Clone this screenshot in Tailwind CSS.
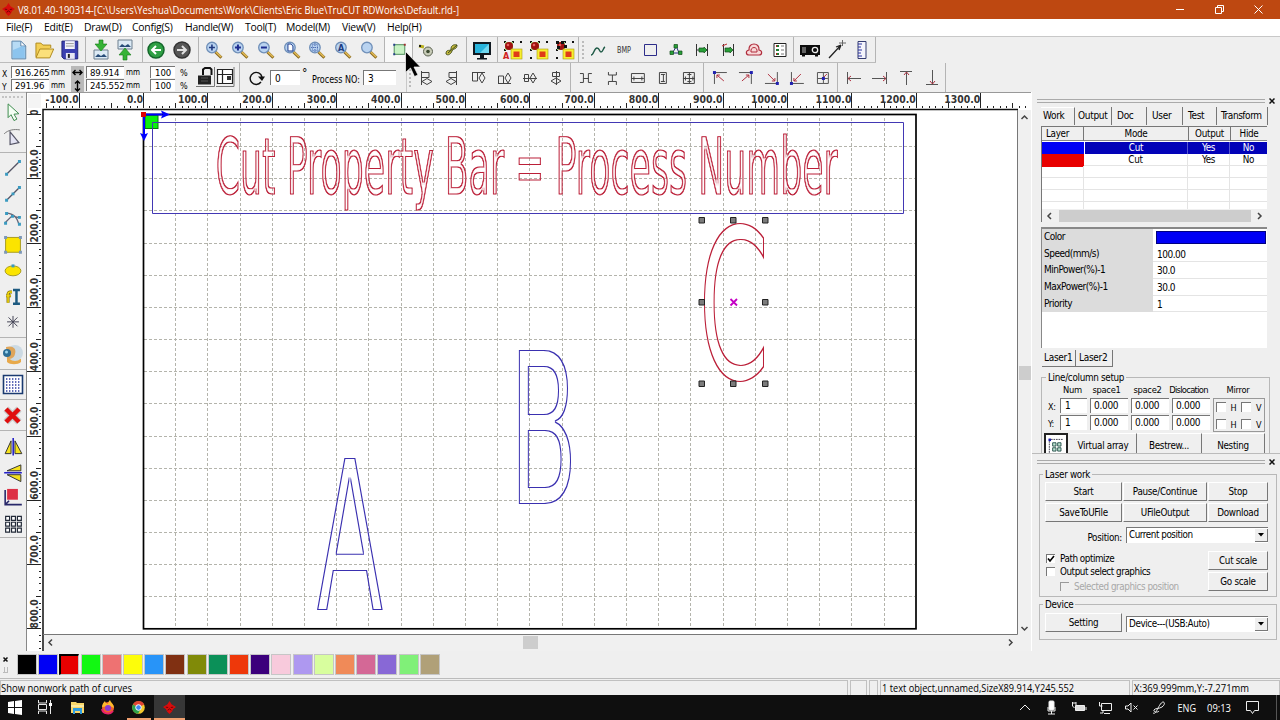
<!DOCTYPE html>
<html lang="en">
 <head>
  <meta charset="utf-8"/>
  <meta content="width=device-width, initial-scale=1.0" name="viewport"/>
  <title>
   RDWorks V8
  </title>
  <script src="https://cdn.jsdelivr.net/npm/@tailwindcss/browser@4"></script>
 </head>
 <body class="w-[1280px] h-[720px] overflow-hidden bg-[#efefef] flex flex-col text-black font-['DejaVu_Sans_Condensed','DejaVu_Sans',sans-serif] text-[10px] leading-none whitespace-nowrap">
  <!-- Shared symbols -->
  <svg class="hidden">
   <symbol id="lens" viewBox="0 0 18 18">
    <path d="M10.5 11l6 5.800" stroke="#8a6a20" stroke-width="3"/>
    <path d="M11 11l5.200 5" stroke="#e3bb55" stroke-width="1.600"/>
    <circle cx="7" cy="6.500" r="5.300" fill="#b9d3f0" stroke="#6f8fb8" stroke-width="1.300"/>
   </symbol>
   <symbol id="logo" viewBox="0 0 14 14">
    <path d="M7 0l2.200 3.600L14 6.400 11 8.600l-1.500 3L7 14l-2.500-2.400L3 8.600 0 6.400l4.800-2.800z" fill="#d80c0c"/>
    <path d="M3 6.600l2.600.4M11 6.600l-2.600.4M5 10l2-1.500 2 1.500" stroke="#6b0000" fill="none"/>
   </symbol>
   <symbol id="pick" viewBox="0 0 20 20">
    <g fill="#111"><path d="M1 1h2v2h-2zM9 1h2v2h-2zM17 1h2v2h-2zM1 9h2v2h-2zM17 9h2v2h-2zM1 17h2v2h-2zM9 17h2v2h-2z"/></g>
    <rect x="2" y="2" width="8" height="8" fill="#9bdc84"/>
    <circle cx="6" cy="6" r="4" fill="#a01010"/>
    <circle cx="5" cy="5" r="1.300" fill="#e86060"/>
    <rect x="8" y="9" width="11" height="10" fill="#f7ee30" stroke="#a89c10" stroke-width=".6"/>
    <rect x="10.500" y="11.500" width="6" height="5.500" fill="#e03a18"/>
   </symbol>
  </svg>
  <!-- Title bar -->
  <header class="h-[19px] shrink-0 bg-[#be4811] text-white flex items-center pl-[2px] font-['Open_Sans',sans-serif]">
   <svg class="w-[13px] h-[13px]"><use href="#logo"/></svg>
   <svg class="w-[460px] h-[19px] ml-[3px] overflow-visible"><text x="0" y="13.500" font-size="10.800" fill="#fff" textLength="441" lengthAdjust="spacingAndGlyphs">V8.01.40-190314-[C:\Users\Yeshua\Documents\Work\Clients\Eric Blue\TruCUT RDWorks\Default.rld-]</text></svg>
   <svg class="ml-auto mr-[20px] w-[90px] h-[19px] overflow-visible" fill="none" stroke="#fff">
    <path d="M6 9.500h8"/>
    <path d="M45.500 7.500h6v6h-6zM47.500 7v-1.500h6v6h-1.500"/>
    <path d="M84.500 5.500l8 8M92.500 5.500l-8 8"/>
   </svg>
  </header>
  <!-- Menu -->
  <nav class="h-[18px] shrink-0 bg-white flex items-center pl-[6px] font-['Open_Sans',sans-serif] text-[10.400px] tracking-[-0.250px] border-b border-[#c8c8c8]">
   <span class="w-[38px]">File(F)</span>
   <span class="w-[40px]">Edit(E)</span>
   <span class="w-[48px]">Draw(D)</span>
   <span class="w-[53px]">Config(S)</span>
   <span class="w-[60px]">Handle(W)</span>
   <span class="w-[41px]">Tool(T)</span>
   <span class="w-[56px]">Model(M)</span>
   <span class="w-[45px]">View(V)</span>
   <span>Help(H)</span>
  </nav>
  <!-- Main toolbar -->
  <div class="h-[26px] shrink-0 flex border-b border-[#bcbcbc] w-[876px]">
   <div class="w-[86px] pl-[6px] pr-[2px] border-r border-[#b4b4b4] flex items-center *:flex-1 *:h-[22px]">
    <svg viewBox="-13 -11 26 22"><path d="M-7-9h9l5 5V9H-7z" fill="#b7dbf5" stroke="#5f86aa"/><path d="M2-9v5h5z" fill="#fff" stroke="#5f86aa"/><path d="M-6 8L-6 0 4-4 6-3V8z" fill="#8cc4ee"/></svg>
    <svg viewBox="-13 -11 26 22"><path d="M-9 7V-7h5l2 2h8v3" fill="#f3cf55" stroke="#b08a20"/><path d="M-9 8l4-9H9L5 8z" fill="#fbe07a" stroke="#b08a20"/></svg>
    <svg viewBox="-13 -11 26 22"><path d="M-8-9H8V9H-6l-2-2z" fill="#3b3fb0" stroke="#24277a"/><path d="M-5-9H5v8H-5z" fill="#f2f2fa"/><path d="M-4-6.500h8M-4-4h8" stroke="#999"/><path d="M-4 3h9v6h-9z" fill="#e6e6f4"/><path d="M-2 4h2v4h-2z" fill="#222"/></svg>
   </div>
   <div class="w-[57px] pl-[3px] pr-[5px] border-r border-[#b4b4b4] flex items-center *:flex-1 *:h-[22px]">
    <svg viewBox="-12 -11 24 22"><path d="M-7 0H7V9H-7z" fill="#dceaf5" stroke="#6d7f8e"/><path d="M-6 7l3-3 3 2 3-2 3 3z" fill="#274c78"/><path d="M-2-10h4v4h4L0 1l-6-7h4z" fill="#36b336" stroke="#167a16" stroke-width=".6"/></svg>
    <svg viewBox="-12 -11 24 22"><path d="M-7-10H7V-1H-7z" fill="#dceaf5" stroke="#6d7f8e"/><path d="M-6-3l3-3 3 2 3-2 3 3z" fill="#274c78"/><path d="M-2 10h4V5h4L0-2l-6 7h4z" fill="#36b336" stroke="#167a16" stroke-width=".6"/></svg>
   </div>
   <div class="w-[56px] pr-[3px] border-r border-[#b4b4b4] flex items-center *:flex-1 *:h-[22px]">
    <svg viewBox="-13 -11 26 22"><circle r="8" fill="#2fa044" stroke="#13662a" stroke-width="1.500"/><path d="M5 0H-4M0-4l-4 4 4 4" stroke="#fff" stroke-width="2" fill="none"/></svg>
    <svg viewBox="-13 -11 26 22"><circle r="8" fill="#565656" stroke="#333" stroke-width="1.500"/><path d="M-5 0H4M0-4l4 4-4 4" stroke="#e0e0e0" stroke-width="2" fill="none"/></svg>
   </div>
   <div class="w-[186px] pl-[2px] pr-[2px] border-r border-[#b4b4b4] flex items-center *:flex-1 *:h-[22px]">
    <svg viewBox="-13 -11 26 22"><use href="#lens" x="-9" y="-9" width="18" height="18"/><path d="M-5-2.500h6M-2-5.500v6" stroke="#223a80" stroke-width="1.600"/></svg>
    <svg viewBox="-13 -11 26 22"><use href="#lens" x="-9" y="-9" width="18" height="18"/><path d="M-5-2.500h6M-2-5.500v6" stroke="#1d2c90" stroke-width="2"/></svg>
    <svg viewBox="-13 -11 26 22"><use href="#lens" x="-9" y="-9" width="18" height="18"/><path d="M-5-2.500h6" stroke="#1d2c90" stroke-width="2"/></svg>
    <svg viewBox="-13 -11 26 22"><use href="#lens" x="-9" y="-9" width="18" height="18"/><path d="M-4-6h3l2 2v5h-5z" fill="#fff" stroke="#1d3c90"/></svg>
    <svg viewBox="-13 -11 26 22"><use href="#lens" x="-9" y="-9" width="18" height="18"/><path d="M-4.500-5.500h5v6h-5zM-6-2.500h8M-2-7v9" fill="none" stroke="#4a6ab0" stroke-dasharray="1 1"/></svg>
    <svg viewBox="-13 -11 26 22"><use href="#lens" x="-9" y="-9" width="18" height="18"/><text x="-5" y="1" font-size="9" font-weight="bold" fill="#1d3c80">A</text></svg>
    <svg viewBox="-13 -11 26 22"><use href="#lens" x="-9" y="-9" width="18" height="18"/></svg>
   </div>
   <div class="w-[28px] pl-[2px] border-r border-[#b4b4b4] bg-[#f8f8f8] flex items-center *:flex-1 *:h-[22px]">
    <svg viewBox="-13 -11 26 22"><path d="M-5.500-5.500h11v10h-11z" fill="#c8f2c4" stroke="#4a8a58"/><path d="M-6.500-6.500h2v2h-2zM-6.500 3.500h2v2h-2z" fill="#28408a"/><path d="M4.500-6.500h2v2h-2z" fill="#a03030"/></svg>
   </div>
   <div class="w-[54px] pr-[1px] border-r border-[#b4b4b4] flex items-center *:flex-1 *:h-[22px]">
    <svg viewBox="-13 -11 26 22"><circle cx="2" cy="1.500" r="4.500" fill="#c8ccb8" stroke="#5a6050"/><circle cx="2" cy="1.500" r="1.800" fill="#3c4a30"/><path d="M-7-4l5 1" stroke="#b8b020" stroke-width="3"/><path d="M-7-4h2" stroke="#222" stroke-width="2"/></svg>
    <svg viewBox="-13 -11 26 22"><path d="M-6 4c0-6 5-2 5-5s2-5 6-4c0 5-4 3-5 6s-4 5-6 3z" fill="#c9bd3c" stroke="#4b5520"/><path d="M-4 3L5-5" stroke="#3d4a20"/></svg>
   </div>
   <div class="w-[31px] border-r border-[#b4b4b4] flex items-center *:flex-1 *:h-[22px]">
    <svg viewBox="-15 -11 30 22"><path d="M-9-8H9V5H-9z" fill="#101820"/><path d="M-7-6H7V3H-7z" fill="#28b4dc"/><path d="M7-6V3H-2z" fill="#6fd8f2"/><path d="M-2 5h4v3h3v1.500H-5V8h3z" fill="#101820"/></svg>
   </div>
   <div class="w-[81px] pl-[2px] border-r border-[#b4b4b4] flex items-center *:flex-1 *:h-[22px]">
    <svg viewBox="-13 -11 26 22"><use href="#pick" x="-10" y="-10" width="20" height="20"/><rect x="-10" y="1" width="6" height="9" fill="#efefef"/><text x="-10" y="9" font-size="9" font-weight="bold" fill="#d02020">A</text></svg>
    <svg viewBox="-13 -11 26 22"><use href="#pick" x="-10" y="-10" width="20" height="20"/></svg>
    <svg viewBox="-13 -11 26 22"><use href="#pick" x="-10" y="-10" width="20" height="20"/><path d="M-9-9h3v3h-3zM-4-9h3v3h-3zM-1-5h3v3h-3zM-8-4h3v3h-3z" fill="#111"/></svg>
   </div>
   <div class="w-[215px] pl-[2px] border-r border-[#b4b4b4] flex items-center">
    <i class="h-[18px] w-[5px] border-l-2 border-dotted border-[#bbb] ml-[1px] mr-[-1px]"></i>
    <div class="flex-1 flex *:flex-1 *:h-[22px]">
     <svg viewBox="-13 -11 26 22"><path d="M-7 5c3 0 3-7 6-7s2 4 4 4 2-4 4-5" fill="none" stroke="#1e5a46" stroke-width="1.400"/></svg>
     <svg viewBox="-13 -11 26 22"><text x="-7" y="3" font-size="8" textLength="14" lengthAdjust="spacingAndGlyphs" fill="#333">BMP</text></svg>
     <svg viewBox="-13 -11 26 22"><path d="M-5.500-5.500h12v11h-12z" fill="none" stroke="#2d2d8a"/></svg>
     <svg viewBox="-13 -11 26 22"><path d="M-3 2L0-3M3 3L1-2M-3 3h6" stroke="#223080"/><path d="M-2-5.500h3.500v3.500h-3.500zM-6 1h3.500v3.500h-3.500zM2.500 1h3.500v3.500H2.500z" fill="#28a038" stroke="#124a1a" stroke-width=".7"/></svg>
     <svg viewBox="-13 -11 26 22"><path d="M-5.500-6V6M5.500-6V6M-6 0h11" stroke="#333"/><path d="M-3-2h5v-1l3 3-3 3V2h-5z" fill="#28a038" stroke="#124a1a" stroke-width=".7"/></svg>
     <svg viewBox="-13 -11 26 22"><path d="M-4.500-6V6M5.500-6V6" stroke="#333"/><path d="M-6-4l5-2" stroke="#c03030"/><path d="M-3-2h5v-1l3 3-3 3V2h-5z" fill="#28a038" stroke="#124a1a" stroke-width=".7"/></svg>
     <svg viewBox="-13 -11 26 22"><path d="M-5 0c-1-8 11-8 10 0 4 1 3 5 0 5H-5c-3 0-4-4 0-5z" fill="#f8d8d8" stroke="#b02c3c" stroke-width="1.200"/><path d="M-3 2c-1-6 7-6 6 0z" fill="none" stroke="#b02c3c"/></svg>
     <svg viewBox="-13 -11 26 22"><path d="M-6-6.500H6v13H-6z" fill="#fff" stroke="#222"/><path d="M-4-4h3M-4 0h3M-4 4h3" stroke="#207a30" stroke-width="2"/><path d="M1-4h3M1 0h3M1 4h3" stroke="#777"/><path d="M-4-4h1M-4 4h1" stroke="#b02020" stroke-width="2"/></svg>
    </div>
   </div>
   <div class="w-[82px] pl-[3px] border-r border-[#b4b4b4] flex items-center *:flex-1 *:h-[22px]">
    <svg viewBox="-13 -11 26 22"><path d="M-10-5H10V5H8v1.500H5V5H-5v1.500h-3V5h-2z" fill="#0c0c0c"/><circle cx="5" r="2.700" fill="#0c0c0c" stroke="#eee" stroke-width="1.300"/><path d="M-7-3v6M-5-3v6" stroke="#bbb"/></svg>
    <svg viewBox="-13 -11 26 22"><path d="M-7 8L5-5M5-5l-5 2M5-5L3 0" stroke="#222" stroke-width="1.300"/><path d="M3-7h7M6.500-10v6" stroke="#666"/></svg>
    <svg viewBox="-13 -11 26 22"><path d="M-4-8.500h8v17h-8z" fill="#f4f4fb" stroke="#333b70"/><path d="M-4-6h4M-4-3h3M-4 0h4M-4 3h3M-4 6h4" stroke="#2a32a0"/></svg>
   </div>
  </div>
  <!-- Property bar and align bar -->
  <div class="h-[29px] shrink-0 flex">
   <div class="w-[240px] h-full flex pl-[2px] pt-[3px] border-r border-[#b4b4b4] text-[9.500px]">
    <div class="w-[9px] pt-[2px] leading-[13px] text-[8.500px]"><p>X</p><p>Y</p></div>
    <div class="w-[38px] flex flex-col gap-px tracking-[-0.100px]">
     <p class="h-[12px] bg-white border-t border-l border-[#777] pl-[3px] leading-[12px]">916.265</p>
     <p class="h-[12px] bg-white border-t border-l border-[#777] pl-[3px] leading-[12px]">291.96</p>
    </div>
    <div class="w-[22px] pl-[2px] leading-[13px] text-[8px]"><p>mm</p><p>mm</p></div>
    <svg class="w-[13px] h-[26px] bg-[#b9b9b9]" viewBox="0 0 13 26"><path d="M2 6.500h9M4.500 4L2 6.500 4.500 9M8.500 4L11 6.500 8.500 9M6.500 15v10M4 17.500L6.500 15 9 17.500M4 22.500L6.500 25 9 22.500" stroke="#000" stroke-width="1.400" fill="none"/></svg>
    <div class="w-[38px] ml-[2px] flex flex-col gap-px tracking-[-0.100px]">
     <p class="h-[12px] bg-white border-t border-l border-[#777] pl-[3px] leading-[12px]">89.914</p>
     <p class="h-[12px] bg-white border-t border-l border-[#777] pl-[3px] leading-[12px]">245.552</p>
    </div>
    <div class="w-[26px] pl-[2px] leading-[13px] text-[8px]"><p>mm</p><p>mm</p></div>
    <div class="w-[25px] flex flex-col gap-px">
     <p class="h-[12px] bg-white border-t border-l border-[#777] pl-[4px] leading-[12px]">100</p>
     <p class="h-[12px] bg-white border-t border-l border-[#777] pl-[4px] leading-[12px]">100</p>
    </div>
    <div class="w-[20px] pl-[5px] pt-px leading-[13px] text-[9px]"><p>%</p><p>%</p></div>
    <svg class="w-[40px] h-[22px]" viewBox="0 0 40 22"><path d="M1 20.500h18.500V1M21 20.500h18V1" stroke="#777" fill="none"/><path d="M8 9V3.500l2-1.500h5l1.500 1.500V9" stroke="#111" stroke-width="2" fill="none"/><path d="M3 9.500h13v9H3z" fill="#222"/><path d="M6 12h7M6 15h7" stroke="#555"/><path d="M22.500 3.500h15v14h-15zM22 8.500h16M27.500 3v15" fill="#fff" stroke="#222" stroke-width="1.200"/><path d="M32 10h4v4h-4z" fill="#333"/></svg>
   </div>
   <div class="w-[166px] h-full flex items-start pl-[8px] pt-[7px]">
    <svg class="w-[17px] h-[17px]" viewBox="0 0 17 17"><path d="M13 12A6 6 0 1 1 14 7" fill="none" stroke="#111" stroke-width="1.400"/><path d="M10 6.500h7L14 11z" fill="#111"/></svg>
    <p class="w-[30px] h-[15px] ml-[5px] bg-white border-t border-l border-[#777] pl-[4px] leading-[15px]">0</p>
    <span class="w-[11px] pl-[2px] -mt-[3px] text-[12px]">°</span>
    <svg class="w-[52px] h-[16px] overflow-visible"><text x="1" y="13" font-size="9.800" textLength="48" lengthAdjust="spacingAndGlyphs">Process NO:</text></svg>
    <p class="w-[33px] h-[15px] bg-white border-t border-l border-[#777] pl-[4px] leading-[15px]">3</p>
   </div>
   <div class="w-[165px] border-r border-l border-l-[#c8c8c8] border-[#b4b4b4] flex items-center pr-px">
    <i class="h-[18px] w-[5px] border-l-2 border-dotted border-[#bbb] ml-[2px] mr-0"></i>
    <div class="flex-1 flex *:flex-1 *:h-[22px]">
     <svg viewBox="-13 -11 26 22" fill="none" stroke="#444"><path d="M-4.500-7V7M-4-5.500h7v5h-7M-4 3.500l5-3 5 3-5 3z"/></svg>
     <svg viewBox="-13 -11 26 22" fill="none" stroke="#444"><path d="M4.500-7V7M4-5.500h-7v5h7M4 3.500l-5-3-5 3 5 3z"/></svg>
     <svg viewBox="-13 -11 26 22" fill="none" stroke="#444"><path d="M-6-5.500H7M-5.500-5v8h5v-8M4-5l3 5-3 5-3-5z"/></svg>
     <svg viewBox="-13 -11 26 22" fill="none" stroke="#444"><path d="M-6 5.500H7M-5.500 5v-7h5v7M4 5l3-5-3-5-3 5z"/></svg>
     <svg viewBox="-13 -11 26 22" fill="none" stroke="#444"><path d="M-7 .5H7M-5.500-3.500h4v7h-4zM3-5l3 5-3 5-3-5z"/></svg>
     <svg viewBox="-13 -11 26 22" fill="none" stroke="#444"><path d="M.5-7V7M-3.500-5.500h7v4h-7zM0 0l5 3-5 3-5-3z"/></svg>
    </div>
   </div>
   <div class="w-[133px] pl-[2px] pr-px border-r border-[#b4b4b4] flex items-center *:flex-1 *:h-[22px]">
    <svg viewBox="-13 -11 26 22" fill="none" stroke="#444"><path d="M-6-4.500h3.500v9H-6M6-4.500H2.500v9H6M-3 .5h6"/></svg>
    <svg viewBox="-13 -11 26 22" fill="none" stroke="#444"><path d="M-3.500-6v3h8v-3M-3.500 7V3.500h8V7M.5-3v6"/></svg>
    <svg viewBox="-13 -11 26 22" fill="none" stroke="#444"><path d="M-6.500-4.500h13v9h-13zM-6 .500H6M-4-1.500v4M4-1.500v4"/></svg>
    <svg viewBox="-13 -11 26 22" fill="none" stroke="#444"><path d="M-3.500-5.500h7v11h-7zM.5-4v8M-2-3.500H2M-2 3.500H2"/></svg>
    <svg viewBox="-13 -11 26 22" fill="none" stroke="#444"><path d="M-5.500-5.500h11v11h-11zM-6 .500H6M.5-6V6M-3.500-1.500v4M4-1.500v4M-1.500-3.500h4M-1.500 3.500h4"/></svg>
   </div>
   <div class="w-[134px] pl-[3px] pr-px border-r border-[#b4b4b4] flex items-center *:flex-1 *:h-[22px]">
    <svg viewBox="-13 -11 26 22" fill="none" stroke="#555"><path d="M-5.500 6V-5.500H7"/><path d="M4 3L-3-3M-3 0v-3H0" stroke="#b03040"/><path d="M-7-7h3v3h-3z" fill="#2020b0" stroke="none"/></svg>
    <svg viewBox="-13 -11 26 22" fill="none" stroke="#555"><path d="M5.500 6V-5.500H-7"/><path d="M-4 3L3-3M3 0v-3H0" stroke="#b03040"/><path d="M4-7h3v3H4z" fill="#2020b0" stroke="none"/></svg>
    <svg viewBox="-13 -11 26 22" fill="none" stroke="#555"><path d="M5.500-6V5.500H-7"/><path d="M-4-4L3 3M3 0v3H0" stroke="#b03040"/><path d="M4 4h3v3H4z" fill="#2020b0" stroke="none"/></svg>
    <svg viewBox="-13 -11 26 22" fill="none" stroke="#555"><path d="M-5.500-6V5.500H7"/><path d="M4-4L-3 3M-3 0v3H0" stroke="#b03040"/><path d="M-7 4h3v3h-3z" fill="#2020b0" stroke="none"/></svg>
    <svg viewBox="-13 -11 26 22" fill="none" stroke="#555"><path d="M-5.500-5.500h11v11h-11zM-5 .500H5M.5-5V5"/><path d="M4-4L0 0" stroke="#b03040"/><path d="M-1-1h3v3h-3z" fill="#2020b0" stroke="none"/></svg>
   </div>
   <div class="w-[108px] pl-[3px] border-r border-[#b4b4b4] flex items-center *:flex-1 *:h-[22px]">
    <svg viewBox="-13 -11 26 22" fill="none" stroke="#555"><path d="M-6.500-6V6M-6 .500H7"/><path d="M-3-2L-6 .500-3 3" stroke="#b03040"/></svg>
    <svg viewBox="-13 -11 26 22" fill="none" stroke="#555"><path d="M6.500-6V6M6 .500H-8"/><path d="M3-2L6 .500 3 3" stroke="#b03040"/></svg>
    <svg viewBox="-13 -11 26 22" fill="none" stroke="#555"><path d="M-6-6.500H6M.5-6V7"/><path d="M-2-3L.5-6 3-3" stroke="#b03040"/></svg>
    <svg viewBox="-13 -11 26 22" fill="none" stroke="#555"><path d="M-6 6.500H6M.5 6V-8"/><path d="M-2 3L.5 6 3 3" stroke="#b03040"/></svg>
   </div>
  </div>
  <!-- Work area -->
  <main class="h-[559px] shrink-0 flex">
   <!-- Drawing tools -->
   <aside class="w-[26px] shrink-0 flex flex-col pt-[3px] border-t border-[#bbb]">
    <i class="h-[2px] w-[21px] mx-[2px] border-t-2 border-dotted border-[#c4c4c4]"></i>
    <div class="h-[55px] pt-px pb-[2px] border-b border-[#b4b4b4] flex flex-col *:flex-1 *:w-[26px]">
     <svg viewBox="-13 -13 26 26"><path d="M-5-8L6 2l-5 .5L4 7.500 1 9l-3-6-3 3z" fill="#f4fff4" stroke="#3c8a4c"/></svg>
     <svg viewBox="-13 -13 26 26"><path d="M-9-4c4-4 10-5 16-4" fill="none" stroke="#777"/><path d="M-3-6L6 5l-9 2z" fill="#e4e4f4" stroke="#556" stroke-width="1.200"/></svg>
    </div>
    <div class="h-[185px] pt-[2px] pb-[2px] border-b border-[#b4b4b4] flex flex-col *:flex-1 *:w-[26px] *:min-h-0">
     <svg viewBox="-13 -13 26 26"><path d="M-6 6L6-6" stroke="#556" stroke-width="1.300"/><path d="M-8 5h3v3h-3zM5-8h3v3H5z" fill="#3a9ac0"/></svg>
     <svg viewBox="-13 -13 26 26"><path d="M-6 6L6-6" stroke="#556" stroke-width="1.300"/><path d="M-8 5h3v3h-3zM5-8h3v3H5zM-1.500-1.500h3v3h-3z" fill="#3a9ac0"/></svg>
     <svg viewBox="-13 -13 26 26"><path d="M-8 4L-1-3 7-1M-7-6C1-5 4-2 6 6" fill="none" stroke="#667" stroke-width="1.300"/><path d="M-9 3h3v3h-3zM-8-7h3v3h-3zM5 4h3v3H5zM5-3h3v3H5zM-2-4h3v3h-3z" fill="#3a9ac0"/></svg>
     <svg viewBox="-13 -13 26 26"><path d="M-7.500-7.500h15v15h-15z" fill="#fbe400" stroke="#a89c20"/><path d="M-9-9h3v3h-3zM6-9h3v3H6zM-9 6h3v3h-3zM6 6h3v3H6z" fill="#7d98b8"/></svg>
     <svg viewBox="-13 -13 26 26"><ellipse rx="8" ry="5" fill="#fbe400" stroke="#a89c20"/><path d="M-1.500-6.500h3v3h-3z" fill="#3a9ac0"/></svg>
     <svg viewBox="-13 -13 26 26"><path d="M0-7h7M3.500-7V7M0 7h7" stroke="#1d5a80" stroke-width="2.500"/><path d="M-1-5h-2c-1 0-2 1-2 2V6M-7-1h5" fill="none" stroke="#7a6a00" stroke-width="3"/><path d="M-1-5h-2c-1 0-2 1-2 2V6M-7-1h5" fill="none" stroke="#f7dc10" stroke-width="1.500"/></svg>
     <svg viewBox="-13 -13 26 26"><path d="M0-6V6M-6 0H6M-4.500-4.500l9 9M4.500-4.500l-9 9" stroke="#445"/></svg>
    </div>
    <div class="h-[32px] border-b border-[#b4b4b4]">
     <svg class="w-[26px] h-[32px]" viewBox="-13 -16 26 32"><path d="M-6 5H8v3c-3 3-11 3-14 0z" fill="#e8a94a"/><circle cx="2" cy="-1" r="8" fill="#ccdae4"/><path d="M-7-7c6-2 11 1 9 7-1 5-6 5-8 5z" fill="#dea55a"/><circle cx="-6" cy="-1" r="4" fill="#2d6e96"/><circle cx="-6.500" cy="-2" r="1.500" fill="#9cd4ee"/></svg>
    </div>
    <div class="h-[30px] border-b border-[#b4b4b4]">
     <svg class="w-[26px] h-[30px]" viewBox="-13 -15 26 30"><path d="M-9.500-9.500h19v18h-19z" fill="#fff" stroke="#1a3a70" stroke-width="1.600"/><path d="M-7-6H8M-7-3H8M-7 0H8M-7 3H8M-7 6H8" stroke="#2c3ca0" stroke-width="1.400" stroke-dasharray="1.400 1.600"/></svg>
    </div>
    <div class="h-[31px] border-b border-[#b4b4b4]">
     <svg class="w-[26px] h-[31px]" viewBox="-13 -15 26 31"><path d="M-7-6L6 7M6-6L-7 7" stroke="#c9c9c9" stroke-width="7"/><path d="M-7-6L6 7M6-6L-7 7" stroke="#e00d0d" stroke-width="4.500"/></svg>
    </div>
    <div class="h-[107px] pt-[3px] pb-px border-b border-[#b4b4b4] flex flex-col *:flex-1 *:w-[26px] *:min-h-0">
     <svg viewBox="-13 -13 26 26"><path d="M-2-6V7h-6zM2-6V7h7z" fill="#f5e11c" stroke="#333"/><path d="M.2-9V9" stroke="#2420c8" stroke-width="1.600"/></svg>
     <svg viewBox="-13 -13 26 26"><path d="M8-8v6H-6zM8 2v7L-6 2z" fill="#f5e11c" stroke="#333"/><path d="M-9 0H9" stroke="#2420c8" stroke-width="1.600"/></svg>
     <svg viewBox="-13 -13 26 26"><path d="M-6-9H5V2H-6z" fill="#dd3045"/><path d="M-8-8V7H9M-8 7l4-4" stroke="#28286a" stroke-width="1.600" fill="none"/></svg>
     <svg viewBox="-13 -13 26 26"><path d="M-7.500-7.500h4v4h-4zM-1.500-7.500h4v4h-4zM4.500-7.500h4v4h-4zM-7.500-1.500h4v4h-4zM-1.500-1.500h4v4h-4zM4.500-1.500h4v4h-4zM-7.500 4.500h4v4h-4zM-1.500 4.500h4v4h-4zM4.500 4.500h4v4h-4z" fill="#fff" stroke="#222a38" stroke-width="1.200"/></svg>
    </div>
   </aside>
   <!-- Rulers and bed, drawn in screen units -->
   <svg class="w-[1005px] h-[559px] shrink-0" viewBox="26 92 1005 559" font-family="DejaVu Sans Condensed, DejaVu Sans, sans-serif">
    <!-- Keeps only a one pixel rim of the filled letters -->
    <filter id="outline" filterUnits="userSpaceOnUse" x="143" y="114" width="773" height="515" color-interpolation-filters="sRGB">
     <feMorphology in="SourceGraphic" operator="erode" radius="1" result="inner"/>
     <feComposite in="SourceGraphic" in2="inner" operator="out"/>
    </filter>
    <rect x="27" y="93" width="1004" height="558" fill="#fff"/>
    <path d="M26 92.500h1005" stroke="#999"/>
    <path d="M26.500 92v559" stroke="#888"/>
    <rect x="28" y="94" width="13" height="14" fill="#f4f4f4"/>
    <g id="rulers" stroke="#222"></g>
    <g id="labels" fill="#333" font-size="10.800" font-weight="bold"></g>
    <path d="M43 651V109.500H1018" fill="none" stroke="#111" stroke-width="1.500"/>
    <rect x="1018" y="110" width="13" height="541" fill="#f0f0f0"/>
    <rect x="44" y="635" width="987" height="16" fill="#f0f0f0"/>
    <path d="M1017.500 110v524.500H43" fill="none" stroke="#777"/>
    <rect x="1019" y="366" width="12" height="14" fill="#cdcdcd"/>
    <rect x="523" y="636" width="15" height="13" fill="#cdcdcd"/>
    <path d="M1021.500 119l3-3 3 3M1021.500 627l3 3 3-3M52 639.500l-3 3 3 3M1009 639.500l3 3-3 3" fill="none" stroke="#444" stroke-width="1.500"/>
    <g id="grid" stroke="#b4b4ac" stroke-dasharray="3 2"></g>
    <rect x="143.500" y="114.500" width="772.500" height="514.300" fill="none" stroke="#000" stroke-width="1.700"/>
    <rect x="145" y="115.500" width="13" height="13" fill="#0cf00c" stroke="#087a08"/>
    <path d="M152.500 213.500V122.500H903.500V213.500z" fill="none" stroke="#4238b4"/>
    <path d="M143.800 114.500H162M144 115v20" stroke="#00f" stroke-width="2"/>
    <path d="M161 110.500l9 4-9 4 1.500-4zM140 133l4 8 4-8-4 1.500z" fill="#00f"/>
    <rect x="141" y="112" width="5" height="5" fill="#e00000"/>
    <!-- Engraved text -->
    <g filter="url(#outline)" font-family="DejaVu Sans">
     <text transform="translate(215.700 194) scale(.4485 1)" font-size="77.500" fill="#bb1f38" stroke="#bb1f38" stroke-width="1">Cut Property Bar = Process Number</text>
     <text transform="translate(316.200 610) scale(.469 1)" font-size="209.500" fill="#3a30b0">A</text>
     <text transform="translate(509 504.200) scale(.48 1)" font-size="210" fill="#3a30b0">B</text>
     <text transform="translate(698.300 379) scale(.486 1)" font-size="210" fill="#bb1f38">C</text>
    </g>
    <path d="M699 217.500h5.500v5.500h-5.500zM730.500 217.500h5.500v5.500h-5.500zM762.500 217.500h5.500v5.500h-5.500zM699 299.500h5.500v5.500h-5.500zM762.500 299.500h5.500v5.500h-5.500zM699 381h5.500v5.500h-5.500zM730.500 381h5.500v5.500h-5.500zM762.500 381h5.500v5.500h-5.500z" fill="#7c7c7c" stroke="#222"/>
    <path d="M730.500 299l6.500 6.500M737 299l-6.500 6.500" stroke="#c400c4" stroke-width="1.800"/>
   </svg>
   <!-- Right panels -->
   <aside class="w-[249px] shrink-0 flex flex-col border-l border-white pl-[5px] tracking-[-0.300px]">
    <div class="h-[15px] flex items-center pt-[2px]">
     <i class="w-[228px] h-[4px] border-t border-b border-[#aaa]"></i>
     <svg class="w-[6px] h-[6px] ml-[4px]"><path d="M.5.500l5 5M5.500.500l-5 5" stroke="#111" stroke-width="1.500"/></svg>
    </div>
    <div class="flex h-[18px] pl-[4px] leading-[18px]">
     <span class="w-[34px] pl-[2px] border-r border-[#777] border-t border-t-white leading-[15px]">Work</span>
     <span class="w-[37px] pl-[3px] border-r border-[#777]">Output</span>
     <span class="w-[35px] pl-[5px] border-r border-[#777]">Doc</span>
     <span class="w-[36px] pl-[5px] border-r border-[#777]">User</span>
     <span class="w-[34px] pl-[5px] border-r border-[#777]">Test</span>
     <span class="w-[51px] pl-[4px] border-r border-[#777] tracking-[-0.450px]">Transform</span>
    </div>
    <div class="ml-[4px] w-[226px] h-[96px] mt-px bg-white border-t border-l border-[#777] flex flex-col text-center text-[9.800px]">
     <div class="h-[14px] bg-[#efefef] grid grid-cols-[42px_105px_42px_36px] leading-[14px] border-b border-[#888]">
      <span class="border-r border-[#777] pr-[10px]">Layer</span>
      <span class="border-r border-[#777]">Mode</span>
      <span class="border-r border-[#777]">Output</span>
      <span>Hide</span>
     </div>
     <div class="h-[12px] mt-px grid grid-cols-[42px_104px_42px_37px] leading-[12px]">
      <span class="bg-[#0000f5]"></span>
      <span class="bg-[#0202b8] text-white ml-px border-r border-[#5555d0]">Cut</span>
      <span class="bg-[#0202b8] text-white border-r border-[#5555d0]">Yes</span>
      <span class="bg-[#0202b8] text-white">No</span>
     </div>
     <div class="h-[12px] grid grid-cols-[42px_104px_42px_37px] leading-[12px] border-b border-[#e4e4e4]">
      <span class="bg-[#e80000] -mb-px"></span>
      <span class="border-r border-[#e4e4e4]">Cut</span>
      <span class="border-r border-[#e4e4e4]">Yes</span>
      <span>No</span>
     </div>
     <div class="h-[12px] grid grid-cols-[42px_104px_42px_37px] border-b border-[#e4e4e4] *:border-r *:border-[#e4e4e4]"><i></i><i></i><i></i></div>
     <div class="h-[12px] grid grid-cols-[42px_104px_42px_37px] border-b border-[#e4e4e4] *:border-r *:border-[#e4e4e4]"><i></i><i></i><i></i></div>
     <div class="h-[12px] grid grid-cols-[42px_104px_42px_37px] border-b border-[#e4e4e4] *:border-r *:border-[#e4e4e4]"><i></i><i></i><i></i></div>
     <div class="flex-1 grid grid-cols-[42px_104px_42px_37px] *:border-r *:border-[#e4e4e4]"><i></i><i></i><i></i></div>
     <div class="h-[13px] bg-[#f0f0f0] flex items-center justify-between px-[4px]">
      <svg class="w-[6px] h-[8px]"><path d="M5 1L2 4l3 3" fill="none" stroke="#444" stroke-width="1.500"/></svg>
      <i class="h-[12px] w-[192px] bg-[#cdcdcd]"></i>
      <svg class="w-[6px] h-[8px]"><path d="M1 1l3 3-3 3" fill="none" stroke="#444" stroke-width="1.500"/></svg>
     </div>
    </div>
    <div class="ml-[4px] mt-[5px] w-[226px] h-[121px] bg-white border-t-2 border-l border-[#888] grid grid-cols-[111px_114px] auto-rows-[16.700px] leading-[15px] content-start tracking-[-0.500px]">
     <span class="bg-[#dcdcdc] pl-[2px]">Color</span>
     <span class="m-[2px_1px_2px_3px] bg-[#0000f5] border border-[#000080]"></span>
     <span class="bg-[#dcdcdc] pl-[2px]">Speed(mm/s)</span>
     <span class="pl-[4px] border-b border-[#e4e4e4] pt-px">100.00</span>
     <span class="bg-[#dcdcdc] pl-[2px]">MinPower(%)-1</span>
     <span class="pl-[4px] border-b border-[#e4e4e4] pt-px">30.0</span>
     <span class="bg-[#dcdcdc] pl-[2px]">MaxPower(%)-1</span>
     <span class="pl-[4px] border-b border-[#e4e4e4] pt-px">30.0</span>
     <span class="bg-[#dcdcdc] pl-[2px]">Priority</span>
     <span class="pl-[4px] border-b border-[#e4e4e4] pt-px">1</span>
    </div>
    <div class="flex ml-[5px] h-[17px] mt-[2px] leading-[16px]">
     <span class="w-[34px] pl-[2px] border-r border-b border-[#777]">Laser1</span>
     <span class="w-[37px] pl-[3px] border-r border-b border-[#777]">Laser2</span>
    </div>
    <div class="h-[87px] overflow-hidden">
     <fieldset class="ml-[4px] mt-[6px] w-[229px] h-[100px] border border-[#b8b8b8] pl-[2px]">
      <legend class="ml-[2px] px-[2px] text-[9.800px]">Line/column setup</legend>
      <div class="grid grid-cols-[42px_41px_41px_41px_58px] text-[9.300px] h-[13px] items-center text-center">
       <span class="pl-[15px]">Num</span>
       <span>space1</span>
       <span>space2</span>
       <span class="tracking-[-0.700px]">Dislocation</span>
       <span>Mirror</span>
      </div>
      <div class="flex h-[37px] pt-[2px]">
       <div class="grid grid-cols-[13px_27px_38px_38px_38px] auto-rows-[15px] gap-y-[2px] gap-x-[3px] leading-[14px] *:border-[#777]">
        <span class="pl-[4px] pt-[2px] text-[9px]">X:</span>
        <span class="bg-white border-t border-l pl-[4px]">1</span>
        <span class="bg-white border-t border-l pl-[3px]">0.000</span>
        <span class="bg-white border-t border-l pl-[3px]">0.000</span>
        <span class="bg-white border-t border-l pl-[3px]">0.000</span>
        <span class="pl-[4px] pt-[2px] text-[9px]">Y:</span>
        <span class="bg-white border-t border-l pl-[4px]">1</span>
        <span class="bg-white border-t border-l pl-[3px]">0.000</span>
        <span class="bg-white border-t border-l pl-[3px]">0.000</span>
        <span class="bg-white border-t border-l pl-[3px]">0.000</span>
       </div>
       <div class="ml-[3px] w-[52px] h-[34px] border border-[#999] grid grid-cols-[10px_15px_10px_15px] gap-y-[2px] pl-[2px] pt-[2px] content-start text-[9px] leading-[14px]">
        <i class="w-[10px] h-[10px] mt-px bg-white border-t border-l border-[#777]"></i><span class="text-center">H</span>
        <i class="w-[10px] h-[10px] mt-px bg-white border-t border-l border-[#777]"></i><span class="text-center">V</span>
        <i class="w-[10px] h-[10px] mt-[2px] bg-white border-t border-l border-[#777]"></i><span class="text-center pt-px">H</span>
        <i class="w-[10px] h-[10px] mt-[2px] bg-white border-t border-l border-[#777]"></i><span class="text-center pt-px">V</span>
       </div>
      </div>
      <div class="flex h-[27px] leading-[23px] text-center text-[9.800px]">
       <svg class="w-[24px] h-[27px] bg-white border-2 border-[#222] mr-[2px]" viewBox="0 0 24 27"><path d="M4 24V5h16" fill="none" stroke="#223" stroke-dasharray="2 1"/><path d="M8 9h4v4H8zM14 9h4v4h-4zM8 15h4v4H8zM14 15h4v4h-4z" fill="#bfe4d4" stroke="#12403a"/><path d="M3 4h3v3H3z" fill="#1818b0"/></svg>
       <span class="w-[67px] border-t border-t-white border-r border-r-[#777]">Virtual array</span>
       <span class="w-[65px] border-t border-t-white border-r border-r-[#777]">Bestrew...</span>
       <span class="w-[63px] border-t border-t-white border-r border-r-[#777]">Nesting</span>
      </div>
     </fieldset>
    </div>
    <div class="h-[15px] border-t border-[#bbb] mt-[-1px] -ml-[5px] pl-[5px] flex items-center pt-[2px]">
     <i class="w-[228px] h-[4px] border-t border-b border-[#aaa]"></i>
     <svg class="w-[6px] h-[6px] ml-[4px]"><path d="M.5.500l5 5M5.500.500l-5 5" stroke="#111" stroke-width="1.500"/></svg>
    </div>
    <fieldset class="ml-[2px] mt-[2px] w-[238px] h-[127px] border border-[#b8b8b8] pl-[5px] flex flex-col text-[9.800px]">
     <legend class="ml-[-2px] px-[2px]">Laser work</legend>
     <div class="grid grid-cols-[77px_84px_60px] auto-rows-[19px] gap-x-px gap-y-[2px] mt-[2px] leading-[18px] text-center *:border *:border-white *:border-r-[#777] *:border-b-[#777]">
      <span>Start</span><span>Pause/Continue</span><span>Stop</span>
      <span>SaveToUFile</span><span>UFileOutput</span><span>Download</span>
     </div>
     <div class="flex mt-[5px] h-[16px]">
      <span class="w-[81px] text-right pr-[4px] pt-[6px] tracking-[-0.300px]">Position:</span>
      <span class="w-[142px] bg-white border-t border-l border-[#777] pl-[2px] flex items-center justify-between tracking-[-0.450px]">Current position <i class="w-[13px] h-[13px] bg-[#efefef] border-r border-b border-[#777] flex items-center justify-center"><svg class="w-[6px] h-[4px]"><path d="M0 0h6L3 3.500z"/></svg></i></span>
     </div>
     <div class="flex mt-[7px]">
      <div class="w-[163px] pl-px pt-[4px] flex flex-col gap-[3px] tracking-[-0.450px]">
       <p class="flex items-center h-[10px]"><i class="w-[9px] h-[9px] bg-white border-t border-l border-[#777] mr-[5px]"><svg class="w-[8px] h-[8px]"><path d="M1 3.500l2 2.500 4-5" fill="none" stroke="#000" stroke-width="1.600"/></svg></i>Path optimize</p>
       <p class="flex items-center h-[10px]"><i class="w-[9px] h-[9px] bg-white border-t border-l border-[#777] mr-[5px]"></i>Output select graphics</p>
       <p class="flex items-center h-[14px] pl-[14px] text-[#a8a8a8]"><i class="w-[9px] h-[9px] border-t border-l border-[#999] mr-[5px]"></i>Selected graphics position</p>
      </div>
      <div class="flex flex-col gap-[2px] pt-px leading-[18px] text-center *:w-[60px] *:h-[19px] *:border *:border-white *:border-r-[#777] *:border-b-[#777]">
       <span>Cut scale</span><span>Go scale</span>
      </div>
     </div>
    </fieldset>
    <fieldset class="ml-[2px] mt-[3px] w-[238px] h-[40px] border border-[#b8b8b8] pl-[5px] text-[9.800px]">
     <legend class="ml-[-2px] px-[2px]">Device</legend>
     <div class="flex gap-[4px] mt-[3px]">
      <span class="w-[77px] h-[19px] leading-[18px] text-center border border-white border-r-[#777] border-b-[#777]">Setting</span>
      <span class="w-[142px] h-[16px] mt-[3px] bg-white border-t border-l border-[#777] pl-[2px] flex items-center justify-between tracking-[-0.400px]">Device---(USB:Auto) <i class="w-[13px] h-[13px] bg-[#efefef] border-r border-b border-[#777] flex items-center justify-center"><svg class="w-[6px] h-[4px]"><path d="M0 0h6L3 3.500z"/></svg></i></span>
     </div>
    </fieldset>
   </aside>
  </main>
  <!-- Colour palette -->
  <div class="h-[28px] shrink-0 flex items-center border-b border-[#bbb]">
   <svg class="w-[17px] h-[22px]" viewBox="0 0 17 22"><path d="M3.500 3.500l4 4M7.500 3.500l-4 4" stroke="#111" stroke-width="1.500"/><path d="M4.500 13v5.500M7.500 13v5.500M3 18.500h5" stroke="#bbb"/></svg>
   <div class="grid grid-cols-20 w-[424px] *:h-[21px] *:w-[20px] *:border *:border-[#c6c6c6]">
    <i class="bg-black"></i>
    <i class="bg-[#0000f5]"></i>
    <i class="bg-[#e80000] border-t-2! border-l-2! border-t-black! border-l-black!"></i>
    <i class="bg-[#12f812]"></i>
    <i class="bg-[#ee7272]"></i>
    <i class="bg-[#fdfd0a]"></i>
    <i class="bg-[#2894f8]"></i>
    <i class="bg-[#803012]"></i>
    <i class="bg-[#808a08]"></i>
    <i class="bg-[#0b9058]"></i>
    <i class="bg-[#ee380a]"></i>
    <i class="bg-[#3c007c]"></i>
    <i class="bg-[#f8cadc]"></i>
    <i class="bg-[#ae98f0]"></i>
    <i class="bg-[#d8fe9e]"></i>
    <i class="bg-[#f08a58]"></i>
    <i class="bg-[#d46896]"></i>
    <i class="bg-[#8868d6]"></i>
    <i class="bg-[#80f078]"></i>
    <i class="bg-[#b0a078]"></i>
   </div>
  </div>
  <!-- Status bar -->
  <div class="h-[16px] shrink-0 flex gap-[2px] pt-px font-['Open_Sans',sans-serif] *:border *:border-[#c0c0c0] *:border-b-0">
   <span class="w-[848px]"><svg class="w-[200px] h-[15px] overflow-visible"><text x="0" y="10.500" font-size="10.500" textLength="131" lengthAdjust="spacingAndGlyphs">Show nonwork path of curves</text></svg></span>
   <span class="w-[17px]"></span>
   <span class="w-[9px]"></span>
   <span class="w-[250px]"><svg class="w-[220px] h-[15px] overflow-visible"><text x="1" y="10.500" font-size="10.500" textLength="192" lengthAdjust="spacingAndGlyphs">1 text object,unnamed,SizeX89.914,Y245.552</text></svg></span>
   <span class="flex-1"><svg class="w-[140px] h-[15px] overflow-visible"><text x="1" y="10.500" font-size="10.500" textLength="115" lengthAdjust="spacingAndGlyphs">X:369.999mm,Y:-7.271mm</text></svg></span>
  </div>
  <!-- Taskbar -->
  <footer class="h-[25px] shrink-0 bg-[#0f0f0f] flex items-center justify-between">
   <div class="flex h-full">
    <svg class="w-[30px] h-[25px]" viewBox="0 0 30 25"><path d="M8 7l6-1v6H8zM15 6l7-1v7h-7zM8 13h6v6l-6-1zM15 13h7v7l-7-1z" fill="#fff"/></svg>
    <svg class="w-[31px] h-[25px]" viewBox="30 0 31 25"><path d="M38.500 5v3h8V5M38.500 19v-3h8v3M38.500 9.500h8v5h-8zM50.500 5v14" fill="none" stroke="#e8e8e8"/><path d="M49 8h3v3h-3z" fill="#fff"/></svg>
    <svg class="w-[31px] h-[25px]" viewBox="61 0 31 25"><path d="M71 7h5l1 1h7v10H71z" fill="#f6d66a"/><path d="M71 10h13v2H71z" fill="#fbe9a0"/><path d="M73 19v-6h9v6h-2v-3h-5v3z" fill="#2f9de0"/></svg>
    <svg class="w-[35px] h-[25px]" viewBox="92 0 35 25"><circle cx="108" cy="13" r="6" fill="#f0602c"/><path d="M102 12c0-3 2-5 3-6 0 2 2 2 3 3 0-2 1-3 2-4 1 3 4 4 4 8l-4-2z" fill="#fdb92c"/><circle cx="108" cy="13" r="3" fill="#8a3ad0"/><path d="M102 14c1 5 8 6 11 2" stroke="#e8206c" stroke-width="2" fill="none"/></svg>
    <svg class="w-[27px] h-[25px]" viewBox="127 0 27 25"><circle cx="138.500" cy="12.500" r="6.300" fill="#f4c92c"/><path d="M138.500 12.500L133 9.400a6.300 6.300 0 0 1 11.200 0z" fill="#e04434"/><path d="M133 9.400a6.300 6.300 0 0 0 5 9.400l3-5z" fill="#2ba24c"/><circle cx="138.500" cy="12.500" r="2.800" fill="#4286f0" stroke="#fff"/><path d="M127 23h24v2h-24z" fill="#f0a070"/></svg>
    <svg class="w-[31px] h-[25px]" viewBox="154 0 31 25"><path d="M154 0h31v25h-31z" fill="#373737"/><use href="#logo" x="163" y="6" width="13" height="13"/><path d="M154 23h31v2h-31z" fill="#f0a070"/></svg>
   </div>
   <svg class="w-[270px] h-[25px]" viewBox="1010 0 270 25" fill="none" stroke="#eee" font-family="Open Sans, sans-serif">
    <path d="M1020 15l5-5 5 5"/>
    <rect x="1049" y="6" width="5" height="9" rx="1" fill="#fff"/><path d="M1048 12v4h7v-4M1051.500 16v3M1048 19h7"/>
    <path d="M1075.500 10.500h9v5h-9z" fill="#ddd"/><path d="M1086 12v3M1072 8h4M1072.500 7v4l2 2M1076 7v3"/>
    <path d="M1101.500 8.500h10v7h-10zM1104 18.500h6M1099.500 7v4h3M1100 18h3v-3"/>
    <path d="M1125.500 11h2.500l3-3v9l-3-3h-2.500zM1133.500 10.500l4 4M1137.500 10.500l-4 4"/>
    <path d="M1153 18c2 1 3-1 4-3s4-8 6-8 2 3-1 5-7 1-8 3 4 3 5 1"/>
    <text x="1177.500" y="16.500" font-size="10.500" fill="#fff" stroke="none" textLength="18.500" lengthAdjust="spacingAndGlyphs">ENG</text>
    <text x="1207" y="16.500" font-size="10.500" fill="#fff" stroke="none" textLength="24" lengthAdjust="spacingAndGlyphs">09:13</text>
    <path d="M1246.500 6.500h12v9h-4l-2 3-2-3h-4z"/>
    <path d="M1276.500 0v25" stroke="#555"/>
   </svg>
  </footer>
  <!-- Mouse pointer -->
  <svg class="absolute left-[404px] top-[50px] w-[18px] h-[28px]" viewBox="0 0 18 28"><path d="M1.500 1.500v21l5-4.500 4 8.500 3.500-1.500-4-8h6.500z" fill="#000" stroke="#fff" stroke-width=".7"/></svg>
  <script>
   // Bed origin and pixels per 100 mm
   const originX = 143.5, originY = 114.5, stepX = 64.4, stepY = 64.3;
   const ns = 'http://www.w3.org/2000/svg';

   function line(parent, x1, y1, x2, y2) {
            const el = document.createElementNS(ns, 'path');
            el.setAttribute('d', `M${x1} ${y1}L${x2} ${y2}`);
            parent.appendChild(el);
        }

   function label(text, x, y, width, rotate) {
            const el = document.createElementNS(ns, 'text');
            el.textContent = text;
            el.setAttribute('textLength', width);
            el.setAttribute('lengthAdjust', 'spacingAndGlyphs');
            el.setAttribute('transform', `translate(${x} ${y}) rotate(${rotate})`);
            document.getElementById('labels').appendChild(el);
        }

   const snap = v => Math.floor(v) + 0.5;
   const rulers = document.getElementById('rulers');
   const grid = document.getElementById('grid');

   for (let i = -15; i <= 137; i++) {
            const x = snap(originX + i * stepX / 10);
            const len = i % 10 === 0 ? 15 : (i % 5 === 0 ? 5 : 2);
            if (x > 44 && x < 1030) line(rulers, x, 108 - len, x, 108);
        }
   for (let i = 0; i <= 83; i++) {
            const y = snap(originY + i * stepY / 10);
            const len = i % 10 === 0 ? 14 : (i % 5 === 0 ? 5 : 2);
            line(rulers, 41 - len, y, 41, y);
        }
   for (let i = -1; i <= 13; i++) {
            const text = (i * 100).toFixed(1);
            const width = { 3: 16, 5: 29.5, 6: i < 0 ? 33 : 36 }[text.length];
            label(text, originX + i * stepX - width - 0.5, 103, width, 0);
        }
   for (let i = 0; i <= 8; i++) {
            label(i ? (i * 100).toFixed(1) : '0', 38, originY + i * stepY + (i ? -0.5 : 1), i ? 29 : 6, -90);
        }
   for (let i = 1; i < 24; i++) {
            const x = snap(originX + i * stepX / 2);
            line(grid, x, 118, x, 628);
        }
   for (let i = 1; i < 16; i++) {
            const y = snap(originY + i * stepY / 2);
            line(grid, 144, y, 915, y);
        }
  </script>
 </body>
</html>
